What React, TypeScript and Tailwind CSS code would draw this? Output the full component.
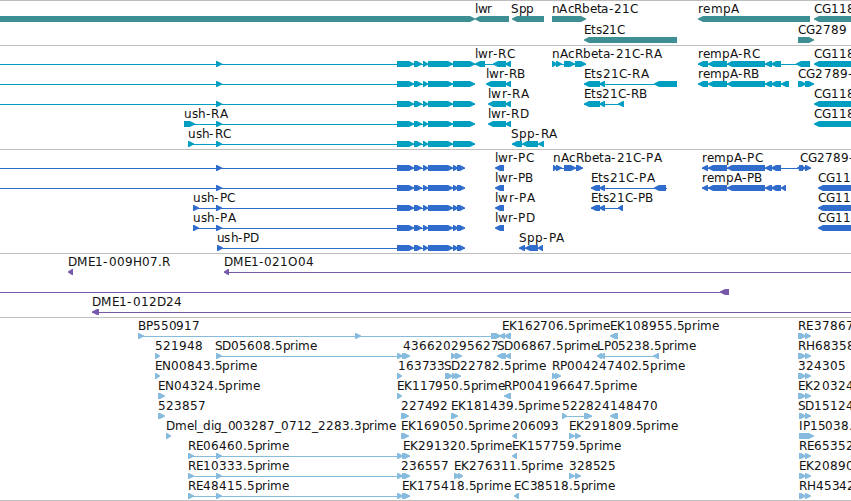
import React from "react";

type Dir = "R" | "L";
/** [start, end, direction] */
type Exon = [number, number, Dir];
/** [start, end] of the connecting intron line */
type Span = [number, number];
/** [x, text, width] */
type Label = [number, string, number];

interface RowData {
  labels: Label[];
  lines?: Span[];
  exons: Exon[];
}

interface TrackData {
  name: string;
  color: string;
  rowHeight: string;
  height: string;
  rows: RowData[];
}

const ADVANCE: Record<string, number> = {
  E: 7.4, K: 7.9, S: 7.5, D: 9.2, R: 8.2, P: 7.2, C: 8.4, G: 9, B: 7.8, N: 9, M: 10.6, A: 8.2, L: 6.7, H: 9,
  O: 9.6, I: 3.6, l: 3.3, w: 9.8, r: 4.9, p: 7.6, m: 11.7, n: 7.6, c: 6.6, b: 7.6, e: 7.4, t: 4.7, a: 7.4,
  s: 6.3, u: 7.6, h: 7.6, i: 3.4, d: 7.6, g: 7.6, ".": 4, "-": 5.3, _: 6.2,
};

function glyphPositions(x: number, text: string, width: number): string {
  const advances = text.split("").map((c) => ADVANCE[c] ?? 8);
  const total = advances.reduce((a, b) => a + b, 0);
  let pos = 0;
  return advances
    .map((a) => {
      const at = x + (pos * width) / total;
      pos += a;
      return Math.round(at);
    })
    .join(" ");
}

function exonPath([start, end, dir]: Exon): string {
  const head = Math.min(end - start, 6);
  if (dir === "R") {
    const s = end - head;
    return `M${start} 13H${s + 1}L${end} 15.5V16.5L${s + 1} 19H${start}Z`;
  }
  const s = start + head;
  return `M${end} 13H${s - 1}L${start} 15.5V16.5L${s - 1} 19H${end}Z`;
}

const R = (...spans: Span[]): Exon[] => spans.map(([a, b]) => [a, b, "R"]);
const L = (...spans: Span[]): Exon[] => spans.map(([a, b]) => [a, b, "L"]);

const ushR = R([216, 222], [397, 414], [414, 422], [423, 428], [428, 453], [453, 475]);
const ushP = R([397, 414], [414, 422], [423, 428], [428, 453], [453, 458], [457, 465]);
const rempCore = L([708, 727], [727, 765], [765, 772], [771, 781]);
const estEnd = R([798, 806], [805, 811]);
const estEndB = R([799, 806], [805, 811]);
const reRead = R([188, 194], [216, 222], [397, 403], [402, 410]);

const tracks: TrackData[] = [
  {
    name: "genes",
    color: "text-[#3e8f94]",
    rowHeight: "h-[21px]",
    height: "h-[45px]",
    rows: [
      {
        labels: [[475, "lwr", 17], [511, "Spp", 23], [552, "nAcRbeta-21C", 86], [698, "rempA", 41], [814, "CG118", 41]],
        exons: [...R([0, 475], [552, 586]), ...L([475, 509], [512, 544], [698, 810], [814, 870])],
      },
      {
        labels: [[584, "Ets21C", 41], [798, "CG2789", 49]],
        exons: [...L([584, 677]), ...R([798, 814])],
      },
    ],
  },
  {
    name: "transcripts",
    color: "text-[#009fc1]",
    rowHeight: "h-5",
    height: "h-[104px]",
    rows: [
      {
        labels: [[475, "lwr-RC", 40], [552, "nAcRbeta-21C-RA", 110], [698, "rempA-RC", 62], [814, "CG118", 41]],
        lines: [[0, 475], [475, 511], [552, 586], [698, 810]],
        exons: [
          ...ushR,
          ...L([475, 485], [493, 506], [505, 511]),
          ...R([552, 557], [556, 562], [564, 575], [575, 586]),
          ...L([698, 708]), ...rempCore, ...L([796, 810], [814, 870]),
        ],
      },
      {
        labels: [[486, "lwr-RB", 39], [584, "Ets21C-RA", 65], [698, "rempA-RB", 61], [798, "CG2789-", 55]],
        lines: [[0, 475], [584, 677], [698, 789], [798, 814]],
        exons: [
          ...ushR,
          ...L([486, 506], [505, 511], [584, 600], [599, 605], [654, 677], [698, 708]),
          ...rempCore, ...L([781, 789]), ...R([798, 806], [805, 814]),
        ],
      },
      {
        labels: [[488, "lwr-RA", 41], [584, "Ets21C-RB", 63], [814, "CG118", 41]],
        lines: [[0, 475], [584, 624]],
        exons: [...ushR, ...L([488, 506], [505, 511], [584, 600], [599, 605], [618, 624], [814, 870])],
      },
      {
        labels: [[184, "ush-RA", 44], [488, "lwr-RD", 41], [814, "CG118", 41]],
        lines: [[184, 475]],
        exons: [...R([184, 195]), ...ushR, ...L([488, 506], [505, 511], [814, 870])],
      },
      {
        labels: [[188, "ush-RC", 43], [511, "Spp-RA", 47]],
        lines: [[188, 475], [512, 544]],
        exons: [...R([188, 194]), ...ushR, ...L([512, 522], [522, 538], [538, 544])],
      },
    ],
  },
  {
    name: "proteins",
    color: "text-[#306ccb]",
    rowHeight: "h-5",
    height: "h-[104px]",
    rows: [
      {
        labels: [[495, "lwr-PC", 39], [553, "nAcRbeta-21C-PA", 109], [702, "rempA-PC", 61], [800, "CG2789-", 54]],
        lines: [[0, 465], [553, 583], [702, 811]],
        exons: [
          ...R([216, 222]), ...ushP, ...L([495, 504]),
          ...R([553, 557], [556, 562], [564, 576], [576, 583]),
          ...L([702, 708]), ...rempCore, ...L([797, 803]), ...R([799, 806], [805, 811]),
        ],
      },
      {
        labels: [[495, "lwr-PB", 38], [591, "Ets21C-PA", 64], [702, "rempA-PB", 60], [818, "CG11", 33]],
        lines: [[0, 465], [591, 667], [702, 786]],
        exons: [
          ...R([216, 222]), ...ushP,
          ...L([495, 504], [591, 600], [599, 605], [654, 666], [702, 708]),
          ...rempCore, ...L([781, 786], [818, 870]),
        ],
      },
      {
        labels: [[193, "ush-PC", 42], [495, "lwr-PA", 40], [591, "Ets21C-PB", 62], [818, "CG11", 33]],
        lines: [[193, 465], [591, 623]],
        exons: [
          ...R([193, 199], [216, 222]), ...ushP,
          ...L([495, 504], [591, 600], [599, 605], [618, 623], [818, 870]),
        ],
      },
      {
        labels: [[193, "ush-PA", 43], [495, "lwr-PD", 40], [818, "CG11", 33]],
        lines: [[193, 465]],
        exons: [...R([193, 199], [216, 222]), ...ushP, ...L([495, 504], [818, 870])],
      },
      {
        labels: [[217, "ush-PD", 42], [519, "Spp-PA", 46]],
        lines: [[217, 465], [519, 543]],
        exons: [...R([217, 223]), ...ushP, ...L([519, 525], [525, 538], [538, 543])],
      },
    ],
  },
  {
    name: "bacs",
    color: "text-[#7659a9]",
    rowHeight: "h-5",
    height: "h-[64px]",
    rows: [
      {
        labels: [[68, "DME1-009H07.R", 102], [224, "DME1-021O04", 90]],
        lines: [[224, 851]],
        exons: L([68, 73], [224, 229]),
      },
      { labels: [], lines: [[0, 729]], exons: L([720, 729]) },
      { labels: [[92, "DME1-012D24", 90]], lines: [[92, 851]], exons: L([92, 99]) },
    ],
  },
  {
    name: "ests",
    color: "text-[#86bbdd]",
    rowHeight: "h-5",
    height: "h-[183px]",
    rows: [
      {
        labels: [[138, "BP550917", 62], [502, "EK162706.5prime", 108], [610, "EK108955.5prime", 109], [798, "RE37867", 56]],
        lines: [[138, 500]],
        exons: [...R([138, 144], [355, 361], [491, 501]), ...L([499, 505], [504, 511], [610, 618]), ...estEnd],
      },
      {
        labels: [
          [155, "521948", 48], [215, "SD05608.5prime", 102], [403, "436620", 48], [451, "295627", 48],
          [497, "SD06867.5prime", 101], [597, "LP05238.5prime", 99], [798, "RH68358", 57],
        ],
        lines: [[216, 410], [597, 659]],
        exons: [
          ...R([155, 160], [216, 222], [397, 403], [402, 410], [451, 457], [455, 462]),
          ...L([497, 506], [505, 511], [597, 602], [600, 605], [653, 659]),
          ...estEnd,
        ],
      },
      {
        labels: [
          [155, "EN00843.5prime", 102], [398, "163733", 47], [444, "SD22782.5prime", 102],
          [552, "RP004247402.5prime", 133], [798, "324305", 48],
        ],
        exons: [...R([155, 160], [397, 402], [445, 453], [452, 457], [455, 461], [552, 557], [555, 561]), ...estEnd],
      },
      {
        labels: [
          [158, "EN04324.5prime", 102], [397, "EK117950.5prime", 108], [504, "RP004196647.5prime", 133],
          [798, "EK20324", 56],
        ],
        exons: [...R([158, 165], [397, 402]), ...L([504, 511]), ...estEnd],
      },
      {
        labels: [
          [158, "523857", 48], [401, "227492", 47], [451, "EK181439.5prime", 109], [562, "522824", 48],
          [610, "148470", 48], [798, "SD15124", 56],
        ],
        lines: [[562, 592]],
        exons: [...R([158, 165], [401, 409], [451, 458], [562, 567], [584, 592]), ...L([610, 618]), ...estEndB],
      },
      {
        labels: [
          [166, "Dmel_dig_003287_0712_2283.3prime", 230], [401, "EK169050.5prime", 109], [512, "206093", 47],
          [569, "EK291809.5prime", 109], [799, "IP15038.", 54],
        ],
        lines: [[569, 581]],
        exons: [...R([166, 171], [401, 409], [569, 575], [575, 581], [799, 814]), ...L([512, 517])],
      },
      {
        labels: [
          [188, "RE06460.5prime", 101], [403, "EK291320.5prime", 109], [512, "EK157759.5prime", 109],
          [799, "RE65352", 55],
        ],
        lines: [[188, 410]],
        exons: [...reRead, ...L([512, 517]), ...estEndB],
      },
      {
        labels: [
          [188, "RE10333.5prime", 101], [401, "236557", 48], [454, "EK276311.5prime", 109], [569, "328525", 47],
          [799, "EK20890", 55],
        ],
        lines: [[188, 410], [569, 581]],
        exons: [...reRead, ...R([454, 460], [458, 463], [569, 575], [575, 581]), ...estEndB],
      },
      {
        labels: [[188, "RE48415.5prime", 101], [402, "EK175418.5prime", 109], [514, "EC38518.5prime", 101], [799, "RH45342", 56]],
        lines: [[188, 410]],
        exons: [...reRead, ...L([514, 519]), ...estEndB],
      },
    ],
  },
];

function FeatureRow({ row, rowHeight }: { row: RowData; rowHeight: string }) {
  return (
    <svg className={`block w-[851px] shrink-0 overflow-visible ${rowHeight}`}>
      {row.lines?.map(([a, b]) => (
        <rect key={`${a}-${b}`} x={a} y={16} width={b - a} height={1} fill="currentColor" />
      ))}
      {row.exons.map((e, i) => (
        <path key={i} d={exonPath(e)} fill="currentColor" />
      ))}
      {row.labels.map(([x, text, width]) => (
        <text key={`${x}${text}`} x={glyphPositions(x, text, width)} y={10} className="fill-[#111111]">
          {text}
        </text>
      ))}
    </svg>
  );
}

function Track({ track }: { track: TrackData }) {
  return (
    <section className={`flex shrink-0 flex-col border-t border-[#bebebe] pt-0.5 ${track.height} ${track.color}`}>
      {track.rows.map((row, i) => (
        <FeatureRow key={i} row={row} rowHeight={track.rowHeight} />
      ))}
    </section>
  );
}

export default function App() {
  return (
    <main className="flex h-[501px] w-[851px] flex-col overflow-hidden border-b border-[#bebebe] bg-white font-['DejaVu_Sans',sans-serif] text-[12px]">
      {tracks.map((t) => (
        <Track key={t.name} track={t} />
      ))}
    </main>
  );
}
